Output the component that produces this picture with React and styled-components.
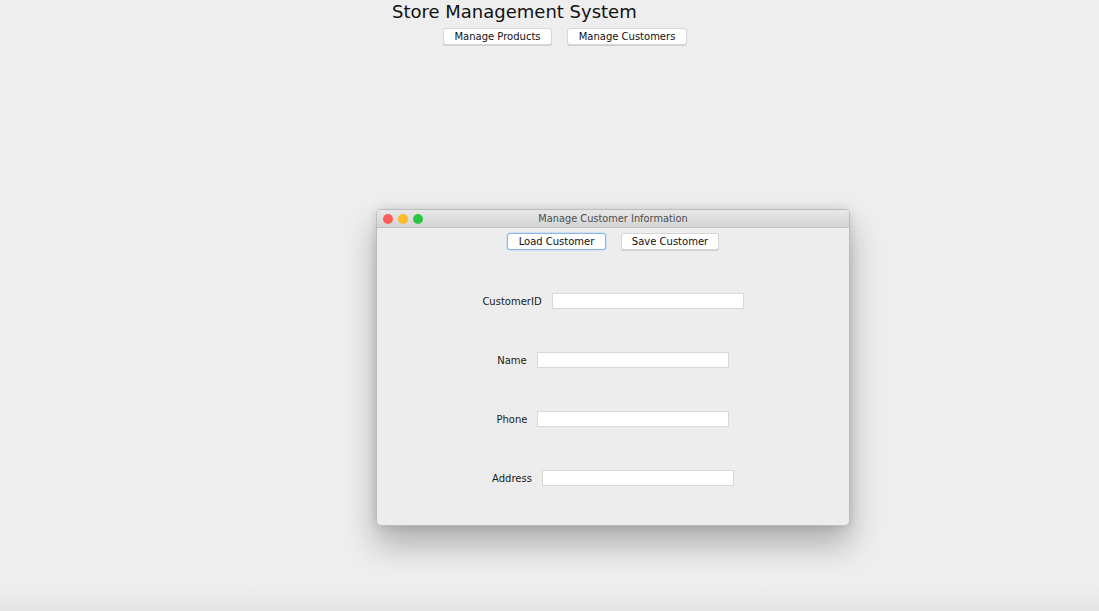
import React from "react"
import styled, { createGlobalStyle } from "styled-components"

const GlobalStyle = createGlobalStyle`
  html, body {
    margin: 0;
    padding: 0;
    background: #eeeeee;
  }
  body {
    font-family: "DejaVu Sans", "Liberation Sans", sans-serif;
    color: #111;
  }
`

const Screen = styled.div`
  width: 1099px;
  height: 611px;
  overflow: hidden;
  display: flex;
  flex-direction: column;
  background: linear-gradient(to bottom, #eeeeee 96%, #e4e4e4 100%);
`

const Header = styled.header`
  display: flex;
  flex-direction: column;
  align-items: flex-start;
`

const Title = styled.h1`
  margin: 0;
  padding: 0 0 0 392px;
  height: 24px;
  font-size: 18px;
  font-weight: normal;
  line-height: 23px;
  color: #111;
`

const Nav = styled.div`
  display: flex;
  gap: 15px;
  padding: 4px 0 0 443px;
`

const Button = styled.button`
  height: 17px;
  width: ${(p) => p.w}px;
  padding: 0;
  background: #fff;
  border: 1px solid ${(p) => (p.focused ? "#8ab6ee" : "#d6d6d6")};
  box-shadow: ${(p) => (p.focused ? "0 0 0 0.5px #b9d4f5" : "0 1px 0 #cfcfcf")};
  border-radius: 3px;
  font-family: "DejaVu Sans", "Liberation Sans", sans-serif;
  font-size: 10px;
  line-height: 15px;
  color: #111;
  cursor: default;
`

const Stage = styled.main`
  flex: 1;
  display: flex;
  padding: 164px 0 0 376px;
`

const Dialog = styled.section`
  width: 474px;
  height: 317px;
  background: #ededed;
  border-radius: 5px;
  border: 1px solid #bdbdbd;
  box-sizing: border-box;
  box-shadow: 0 18px 32px rgba(0, 0, 0, 0.28), 0 0 10px rgba(0, 0, 0, 0.12);
  display: flex;
  flex-direction: column;
  overflow: hidden;
`

const TitleBar = styled.div`
  height: 17px;
  flex: none;
  display: flex;
  align-items: center;
  position: relative;
  background: linear-gradient(to bottom, #e8e8e8, #d4d4d4);
  border-bottom: 1px solid #c4c4c4;
`

const Lights = styled.div`
  display: flex;
  gap: 5px;
  padding-left: 6px;
`

const Light = styled.span`
  width: 10px;
  height: 10px;
  border-radius: 50%;
  background: ${(p) => p.c};
`

const WindowTitle = styled.div`
  position: absolute;
  left: 0;
  right: 0;
  text-align: center;
  font-size: 9.8px;
  color: #4d4d4d;
  pointer-events: none;
`

const Toolbar = styled.div`
  display: flex;
  justify-content: center;
  gap: 15px;
  padding-top: 5px;
`

const Form = styled.div`
  display: flex;
  flex-direction: column;
  gap: 43px;
  padding-top: 43px;
`

const Row = styled.div`
  display: flex;
  justify-content: center;
  align-items: center;
  gap: 10px;
  height: 16px;
`

const Label = styled.label`
  font-size: 10px;
  color: #1a1a1a;
`

const Input = styled.input`
  width: 192px;
  height: 16px;
  box-sizing: border-box;
  border: 1px solid #d9d9d9;
  background: #fff;
  padding: 0 3px;
  font-size: 10px;
  outline: none;
`

const fields = ["CustomerID", "Name", "Phone", "Address"]

const App = () => {
  return (
    <>
      <GlobalStyle />
      <Screen>
        <Header>
          <Title>Store Management System</Title>
          <Nav>
            <Button w={109}>Manage Products</Button>
            <Button w={120}>Manage Customers</Button>
          </Nav>
        </Header>
        <Stage>
          <Dialog>
            <TitleBar>
              <Lights>
                <Light c="#fc5f57" />
                <Light c="#fdbc2e" />
                <Light c="#28c840" />
              </Lights>
              <WindowTitle>Manage Customer Information</WindowTitle>
            </TitleBar>
            <Toolbar>
              <Button w={99} focused>
                Load Customer
              </Button>
              <Button w={98}>Save Customer</Button>
            </Toolbar>
            <Form>
              {fields.map((f) => (
                <Row key={f}>
                  <Label>{f}</Label>
                  <Input />
                </Row>
              ))}
            </Form>
          </Dialog>
        </Stage>
      </Screen>
    </>
  )
}

export default App
